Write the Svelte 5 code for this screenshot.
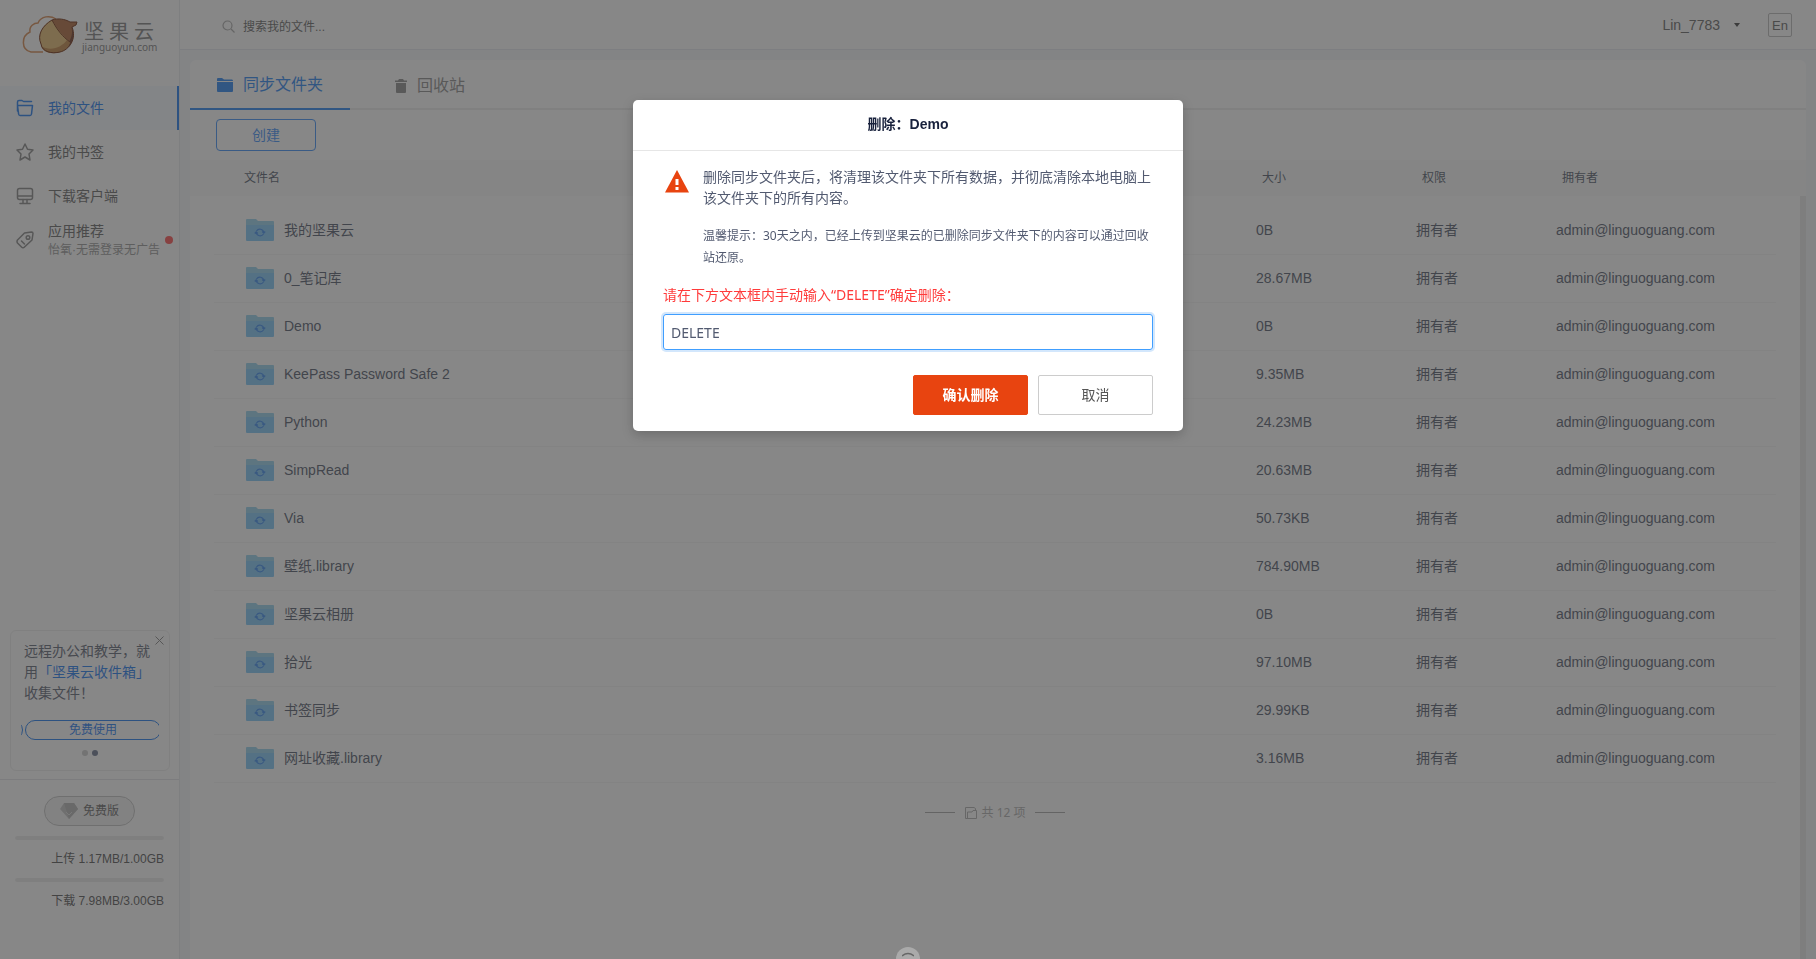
<script>
  const nav = [
    { icon: 'folder', label: '我的文件', active: true },
    { icon: 'star', label: '我的书签' },
    { icon: 'client', label: '下载客户端' },
    { icon: 'tag', label: '应用推荐', note: '怡氧·无需登录无广告' }
  ];
  const files = [
    ['我的坚果云', '0B'],
    ['0_笔记库', '28.67MB'],
    ['Demo', '0B'],
    ['KeePass Password Safe 2', '9.35MB'],
    ['Python', '24.23MB'],
    ['SimpRead', '20.63MB'],
    ['Via', '50.73KB'],
    ['壁纸.library', '784.90MB'],
    ['坚果云相册', '0B'],
    ['拾光', '97.10MB'],
    ['书签同步', '29.99KB'],
    ['网址收藏.library', '3.16MB']
  ];
  const owner = 'admin@linguoguang.com';
  let confirmText = $state('DELETE');
</script>

<div class="page">
  <aside>
    <a class="logo" href="#home" aria-label="坚果云">
      <svg width="56" height="40" viewBox="0 0 56 40">
        <path d="M21 37H9C-1 35-1 21 8 17C7 11 12 8 16 8C19 1 28 0 34 4" fill="none" stroke="#d88950" stroke-width="1.500" />
        <path d="M30 5C20 11 15 20 19 29C20 37 30 39 38 37C47 35 55 24 50 12L54 10L55 7L48 7C43 4 36 3 30 5Z" fill="#b0683a" />
        <path d="M49 11C54 20 51 28 45 33L47 27C50 22 51 16 49 11Z" fill="#6e3926" />
        <path d="M30 5C20 10 15 20 19 29C20 37 30 39 38 37C43 36 47 31 48 27C42 22 35 14 30 5Z" fill="#e6bc70" />
        <path d="M19 31C29 37 40 32 45 25L48 27C47 33 41 37 34 38C26 39 21 36 19 31Z" fill="#c08444" />
        <path d="M30 5C20 11 15 20 19 29C20 37 30 39 38 37C47 35 55 24 50 12L54 10L55 7L48 7C43 4 36 3 30 5C35 15 41 22 48 27" fill="none" stroke="#702d10" />
      </svg>
      <span class="brand"><strong>坚果云</strong><span>jianguoyun.com</span></span>
    </a>
    <nav>
      {#each nav as item}
        <a href="#{item.icon}" class:active={item.active}>
          <svg width="18" height="18" viewBox="0 0 18 18" fill="none" stroke="currentColor" stroke-width="1.500" stroke-linejoin="round" stroke-linecap="round">
            {#if item.icon === 'folder'}
              <path d="M1.500 12V3Q1.500 1.500 3 1.500H6L7.500 2.500H15.500M1.500 6.500H16.500L15.500 15Q15.300 16.500 14 16.500H4Q2.800 16.500 2.600 15L1.500 6.500" />
            {:else if item.icon === 'star'}
              <path d="M9 1L11.500 6.200L17 7L13 11L14 17L9 14L4 17L5 11L1 7L6.500 6.200Z" />
            {:else if item.icon === 'client'}
              <rect x="1.500" y="1.500" width="15" height="11" rx="2" /><path d="M2 9H16M7 12.500V16M11 12.500V16M4 16.500H14" />
            {:else}
              <path d="M8.500 2L15.500 1Q17 1 17 2.500L16 9L8.500 16Q7 17.500 5.500 16L1.500 12Q.5 10.500 1.500 9Z" /><circle cx="12" cy="6.500" r="1.800" /><path d="M5.500 10L8.500 13" />
            {/if}
          </svg>
          <span class="navtext"><span>{item.label}</span>{#if item.note}<small>{item.note}</small>{/if}</span>
          {#if item.note}<i class="reddot"></i>{/if}
        </a>
      {/each}
    </nav>
    <section class="promo">
      <button class="close" aria-label="关闭"><svg width="9" height="9" viewBox="0 0 9 9"><path d="M.5 .5L8.500 8.500M8.500 .5L.5 8.500" stroke="#888" /></svg></button>
      <p>远程办公和教学，就<br />用<a href="#inbox">「坚果云收件箱」</a><br />收集文件！</p>
      <div class="slider"><i></i><button>免费使用</button></div>
      <div class="dots"><i></i><i class="on"></i></div>
    </section>
    <footer>
      <button class="plan">
        <svg width="18" height="16" viewBox="0 0 18 16"><path d="M4 0H14L18 6L9 16L0 6Z" fill="#c4c4c4" /><path d="M14 0L18 6L9 16L4 0Z" fill="#b4b4b4" /><path d="M6 9L9 12L12 9" fill="none" stroke="#ddd" /></svg>
        免费版
      </button>
      <div class="meter"></div><span>上传 1.17MB/1.00GB</span>
      <div class="meter"></div><span>下载 7.98MB/3.00GB</span>
    </footer>
  </aside>

  <div class="main">
    <header>
      <label class="search">
        <svg width="13" height="13" viewBox="0 0 13 13" fill="none" stroke="#aaa" stroke-width="1.200"><circle cx="5.500" cy="5.500" r="4.500" /><path d="M9 9L12.500 12.500" /></svg>
        <input type="search" aria-label="搜索" placeholder="搜索我的文件..." />
      </label>
      <button class="user">Lin_7783 <i></i></button>
      <button class="lang">En</button>
    </header>
    <main>
      <div class="tabs">
        <button class="on"><svg width="16" height="14" viewBox="0 0 16 14"><path d="M0 1Q0 0 1 0H5L7 1.500H15Q16 1.500 16 3H0ZM0 4H16V13Q16 14 15 14H1Q0 14 0 13Z" fill="currentColor" /></svg>同步文件夹</button>
        <button><svg width="12" height="14" viewBox="0 0 12 14"><path d="M0 1.500H3L4 0H8L9 1.500H12V3H0ZM1 4H11V13Q11 14 10 14H2Q1 14 1 13Z" fill="currentColor" /></svg>回收站</button>
      </div>
      <div class="tools"><button>创建</button></div>
      <div class="list">
        <table>
          <thead><tr><th>文件名</th><th>大小</th><th>权限</th><th>拥有者</th></tr></thead>
          <tbody>
            {#each files as [name, size]}
              <tr>
                <td><span class="file"><svg width="28" height="22" viewBox="0 0 28 22"><path d="M0 1Q0 0 1 0H10L12 2H27Q28 2 28 3V8H0Z" fill="#96d2ee" /><path d="M0 6H28V21Q28 22 27 22H1Q0 22 0 21Z" fill="#80c8f8" /><path d="M10.500 12A4 4 0 0 1 17.800 13.500M17.500 15A4 4 0 0 1 10.200 13.500M8.800 14.500L10.200 12.800L11.800 14.500M16.200 12.500L17.800 14.200L19.200 12.500" fill="none" stroke="#3d8cf0" stroke-width="1.200" /></svg>{name}</span></td>
                <td>{size}</td><td>拥有者</td><td>{owner}</td>
              </tr>
            {/each}
          </tbody>
        </table>
        <div class="total"><i></i><span><svg width="12" height="12" viewBox="0 0 12 12" fill="none" stroke="currentColor"><path d="M10.500 3V1.500L9 .5H.5V11.500H11.500V3.500H8L7 5H2.500V11" /></svg>共 12 项</span><i></i></div>
      </div>
    </main>
  </div>
</div>

<div class="overlay">
  <div class="modal" role="dialog" aria-modal="true" aria-labelledby="dialog-title">
    <h2 id="dialog-title">删除：Demo</h2>
    <div class="body">
      <div class="warning">
        <svg width="24" height="23" viewBox="0 0 24 23"><path d="M12 0L24 22.500H0Z" fill="#e84410" /><path d="M10.500 9H13.500V15H10.500ZM10.500 17H13.500V20H10.500Z" fill="#fff" /></svg>
        <div>
          <p>删除同步文件夹后，将清理该文件夹下所有数据，并彻底清除本地电脑上该文件夹下的所有内容。</p>
          <p class="hint">温馨提示：30天之内，已经上传到坚果云的已删除同步文件夹下的内容可以通过回收站还原。</p>
        </div>
      </div>
      <label for="confirm">请在下方文本框内手动输入“DELETE”确定删除：</label>
      <input id="confirm" type="text" bind:value={confirmText} />
      <div class="actions"><button class="danger">确认删除</button><button>取消</button></div>
    </div>
  </div>
</div>
<button class="expand" aria-label="展开"><svg width="12" height="5" viewBox="0 0 12 5"><path d="M0 4Q6 -1 12 4" fill="none" stroke="#666" stroke-width="1.500" /></svg></button>

<style>
  :global(body) { background: #f5f7fa; }
  :global(*) { box-sizing: border-box; }
  .page, .overlay { font: 14px/20px "Liberation Sans", "Noto Sans CJK SC", sans-serif; color: #666; }
  button, input { font: inherit; color: inherit; background: none; border: 0; padding: 0; }
  a { color: inherit; text-decoration: none; }
  p { margin: 0; }
  svg { flex: none; display: block; }
  .page { display: flex; height: 100vh; overflow: hidden; background: #f5f7fb; }

  aside { flex: none; width: 180px; display: flex; flex-direction: column; background: #fff; border-right: 1px solid #e8eaee; }
  .logo { display: flex; gap: 4px; height: 86px; padding: 15px 0 0 22px; }
  .brand { display: flex; flex-direction: column; color: #808080; }
  .brand strong { font: 400 20px/22px "Noto Sans CJK SC", sans-serif; letter-spacing: 5px; padding: 5px 0 0 2px; }
  .brand span { font: 10px/11px "Noto Sans", sans-serif; }
  nav a { display: flex; align-items: center; gap: 14px; height: 44px; padding-left: 16px; }
  nav a svg { color: #888; }
  nav a.active { background: #f5f9ff; border-right: 2px solid #1f7bf0; color: #1f7bf0; }
  nav a.active svg { color: #1f7bf0; }
  .navtext { display: flex; flex-direction: column; white-space: nowrap; }
  .navtext small { font-size: 12px; line-height: 18px; color: #999; }
  .reddot { width: 8px; height: 8px; border-radius: 50%; background: #ff5050; margin-left: -9px; }

  .promo { position: relative; margin: auto 9px 8px 10px; padding: 10px 10px 14px; border: 1px solid #eee; border-radius: 6px; }
  .promo p { padding-left: 3px; line-height: 21px; white-space: nowrap; color: #606675; }
  .promo p a { color: #1f7bf0; }
  .close { position: absolute; top: 5px; right: 5px; }
  .slider { display: flex; gap: 2px; margin-top: 16px; overflow: hidden; }
  .slider i { flex: none; width: 20px; height: 20px; margin-left: -18px; border: 1px solid #1f7bf0; border-radius: 10px; }
  .slider button { flex: none; width: 136px; height: 20px; line-height: 18px; border: 1px solid #1f7bf0; border-radius: 10px; color: #1f7bf0; font-size: 12px; }
  .dots { display: flex; justify-content: center; gap: 4px; margin-top: 10px; }
  .dots i { width: 6px; height: 6px; border-radius: 50%; background: #ccc; }
  .dots .on { background: #6b7690; }
  footer { height: 180px; padding: 16px 15px 0; border-top: 1px solid #e4e4e8; font-size: 12px; text-align: right; display: flex; flex-direction: column; }
  .plan { display: flex; align-items: center; justify-content: center; gap: 5px; align-self: center; width: 91px; height: 30px; margin-bottom: 10px; border: 1px solid #c4c4c4; border-radius: 15px; background: #f3f3f3; }
  .meter { height: 4px; border-radius: 2px; background: #ececec; }
  footer span { height: 38px; line-height: 38px; color: #555; }

  .main { flex: 1; min-width: 0; display: flex; flex-direction: column; }
  header { display: flex; align-items: center; height: 50px; flex: none; padding: 0 24px 0 42px; background: #fff; border-bottom: 1px solid #e5e9f0; }
  .search { display: flex; align-items: center; gap: 8px; flex: 1; padding-top: 4px; font-size: 12px; }
  .search input { outline: 0; flex: 1; appearance: none; }
  .search input::placeholder { color: #666; opacity: 1; }
  .user { display: flex; align-items: center; gap: 14px; margin-right: 28px; }
  .user i { border: 3px solid transparent; border-top: 4px solid #444; border-bottom: 0; }
  .lang { width: 24px; height: 24px; border: 1px solid #bbb; border-radius: 2px; font-size: 13px; line-height: 24px; }
  main { flex: 1; min-height: 0; display: flex; flex-direction: column; margin: 10px 10px 0; background: #fff; border-radius: 6px 6px 0 0; }
  .tabs { display: flex; height: 50px; flex: none; border-bottom: 2px solid #eee; }
  .tabs button { display: flex; align-items: center; justify-content: center; gap: 10px; width: 160px; height: 50px; padding-top: 2px; font-size: 16px; color: #8c8c8c; }
  .tabs .on { border-bottom: 2px solid #2a85f2; color: #2a85f2; }
  .tools { padding: 9px 26px; flex: none; }
  .tools button { width: 100px; height: 32px; border: 1px solid #3f92fa; border-radius: 4px; color: #3f92fa; display: block; }
  .list {
    flex: 1;
    min-height: 0;
    padding: 0 30px 0 24px;
    background:
      linear-gradient(#fafafa, #fafafa) 0 0 / 100% 36px no-repeat,
      linear-gradient(#e8e8e8, #e8e8e8) 100% 36px / 6px 100% no-repeat;
  }
  table { width: 100%; table-layout: fixed; border-collapse: collapse; color: #535a6c; }
  th, td { text-align: left; padding: 0; }
  th { height: 36px; padding-left: 6px; font-size: 12px; font-weight: 400; }
  th:first-child { padding-left: 30px; }
  th:nth-child(2) { width: 160px; }
  th:nth-child(3) { width: 140px; }
  th:nth-child(4) { width: 220px; }
  tbody::before { content: ''; display: block; height: 10px; }
  td { height: 48px; border-bottom: 1px solid #f6f6f6; }
  .file { display: flex; align-items: center; gap: 10px; padding-left: 32px; }
  .total { display: flex; align-items: center; justify-content: center; gap: 10px; height: 60px; color: #b0b0b0; font: 12px/20px "Noto Sans", "Noto Sans CJK SC", sans-serif; }
  .total i { width: 30px; height: 1px; background: #a8a8a8; }
  .total span { display: flex; align-items: center; gap: 5px; }

  .overlay { position: fixed; inset: 0; display: flex; justify-content: center; align-items: flex-start; padding-top: 100px; background: rgba(55, 55, 55, 0.6); font-family: "Noto Sans", "Noto Sans CJK SC", sans-serif; color: #525a70; }
  .modal { width: 550px; background: #fff; border-radius: 5px; box-shadow: 0 4px 12px rgba(0, 0, 0, 0.2); }
  h2 { margin: 0; height: 51px; border-bottom: 1px solid #e6e6e6; text-align: center; color: #18213c; font: 700 14px/48px "Liberation Sans", "Noto Sans CJK SC", sans-serif; }
  .body { padding: 15px 30px 16px; }
  .warning { display: flex; gap: 14px; padding-left: 2px; }
  .warning svg { margin-top: 4px; }
  .warning p { line-height: 21px; }
  .warning .hint { margin-top: 17px; font-size: 12px; line-height: 22px; }
  .body label { display: block; margin: 16px 0 9px; color: #ff3b3b; }
  .body input { display: block; width: 100%; height: 36px; padding: 0 7px; border: 1px solid #409eff; border-radius: 3px; outline: 0; box-shadow: 0 0 0 2px #d3e7fc; }
  .actions { display: flex; justify-content: flex-end; gap: 10px; margin-top: 25px; }
  .actions button { width: 115px; height: 40px; border: 1px solid #ccc; border-radius: 2px; color: #555; }
  .actions .danger { background: #e84410; border-color: #e84410; color: #fff; font-weight: 700; }
  .expand { position: fixed; bottom: -12px; left: 50%; display: flex; align-items: flex-start; width: 24px; height: 24px; margin-left: -12px; padding: 5px 6px; border-radius: 50%; background: #aaa; }
</style>
